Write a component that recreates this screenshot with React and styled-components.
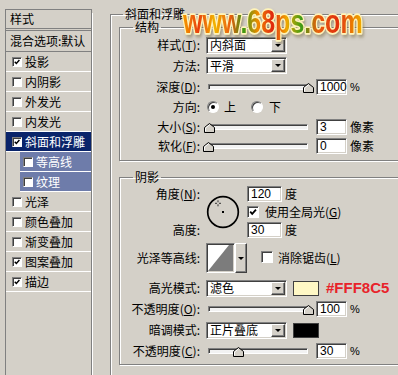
import React from "react";
import styled, { createGlobalStyle } from "styled-components";

const FACE = "#D4D0C8";
const SHADOW = "#808080";
const DARK = "#404040";
const CJK = `"Noto Sans CJK SC", "Noto Sans", sans-serif`;
const LATIN = `"Liberation Sans", Arial, sans-serif`;

const Global = createGlobalStyle`
  html, body { margin: 0; padding: 0; background: ${FACE}; }
  body {
    width: 398px; height: 375px; overflow: hidden;
    font-family: ${CJK}; font-size: 12px; line-height: 14px; color: #000;
  }
  * { box-sizing: border-box; }
`;

const Root = styled.div`
  position: relative;
  display: flex;
  align-items: flex-start;
  width: 398px;
  height: 375px;
  overflow: hidden;
`;

/* ---------- left style list ---------- */
const StyleList = styled.div`
  flex: none;
  width: 87px;
  height: 380px;
  margin: 9px 0 0 5px;
  border: 1px solid ${SHADOW};
  box-shadow: 5px 0 0 -4px #fff;
`;

const ListHeader = styled.div`
  display: flex;
  align-items: center;
  height: 21px;
  padding-left: 4px;
  border-bottom: 3px double ${SHADOW};
`;

const BlendRow = styled.div`
  display: flex;
  align-items: center;
  height: 21px;
  padding-left: 4px;
  border-bottom: 1px solid ${SHADOW};
  white-space: nowrap;
`;

const ListItem = styled.div`
  display: flex;
  align-items: center;
  gap: 3px;
  height: 20px;
  margin-left: ${(p) => (p.$sub ? 14 : 0)}px;
  padding-left: ${(p) => (p.$sub ? 3 : 6)}px;
  border-bottom: 1px solid #fff;
  background: ${(p) => (p.$selected ? "#0A246A" : p.$sub ? "#6E7CAA" : "transparent")};
  color: ${(p) => (p.$selected || p.$sub ? "#fff" : "#000")};
  white-space: nowrap;
`;

const Box = styled.span`
  flex: none;
  display: inline-flex;
  width: ${(p) => p.$size}px;
  height: ${(p) => p.$size}px;
  background: #fff;
  border: 1px solid;
  border-color: ${SHADOW} #fff #fff ${SHADOW};
  box-shadow: inset 1px 1px ${DARK};
  svg { display: block; }
`;

function Check({ on, size = 10 }) {
  return (
    <Box $size={size}>
      {on && (
        <svg width={size - 2} height={size - 2} viewBox="0 0 10 10">
          <path d="M2.2 4.6 L4.2 6.8 L8 2.6" fill="none" stroke="#000" strokeWidth="1.8" />
        </svg>
      )}
    </Box>
  );
}

/* ---------- right dialog ---------- */
const EffectFrame = styled.fieldset`
  flex: none;
  width: 330px;
  height: 400px;
  margin: 8px 0 0 18px;
  padding: 0 0 0 8px;
  border: 1px solid ${SHADOW};
  box-shadow: inset 1px 1px #fff, 1px 1px #fff;
  min-inline-size: 0;
`;

const Section = styled.fieldset`
  width: 300px;
  margin: ${(p) => p.$mt}px 0 0 0;
  padding: ${(p) => p.$pad};
  border: 1px solid ${SHADOW};
  box-shadow: inset 1px 1px #fff, 1px 1px #fff;
  min-inline-size: 0;
`;

const Caption = styled.legend`
  margin-left: ${(p) => p.$indent}px;
  padding: 0 2px;
  height: 12px;
  line-height: 12px;
  white-space: nowrap;
`;

const Row = styled.div`
  display: flex;
  align-items: center;
  height: ${(p) => p.$h || 20}px;
  margin-top: ${(p) => p.$mt || 0}px;
  white-space: nowrap;
`;

const Label = styled.span`
  flex: none;
  width: 80px;
  margin-right: 6px;
  text-align: right;
  white-space: nowrap;
`;

const Unit = styled.span`
  margin-left: ${(p) => (p.$gap ?? 3)}px;
  font-family: ${(p) => (p.$latin ? LATIN : CJK)};
  font-size: ${(p) => (p.$latin ? 11 : 12)}px;
`;

const Sunken = `
  border: 1px solid;
  border-color: ${SHADOW} #fff #fff ${SHADOW};
  box-shadow: inset 1px 1px ${DARK}, inset -1px -1px ${FACE};
`;

const Raised = `
  background: ${FACE};
  border: 1px solid;
  border-color: #fff ${DARK} ${DARK} #fff;
  box-shadow: inset -1px -1px ${SHADOW};
`;

const NumField = styled.div`
  flex: none;
  width: ${(p) => p.$w || 31}px;
  height: 16px;
  ${Sunken}
  background: #fff;
  padding-left: 3px;
  font-family: ${LATIN};
  font-size: 12px;
  line-height: 14px;
`;

const Arrow = styled.span`
  width: 0;
  height: 0;
  border-left: 3px solid transparent;
  border-right: 3px solid transparent;
  border-top: 3px solid #000;
`;

const DropButton = styled.span`
  flex: none;
  display: flex;
  align-items: center;
  justify-content: center;
  width: ${(p) => p.$w || 14}px;
  height: ${(p) => p.$h || 13}px;
  ${Raised}
`;

const SelectBox = styled.div`
  flex: none;
  display: flex;
  align-items: center;
  justify-content: space-between;
  width: 81px;
  height: 17px;
  ${Sunken}
  background: #fff;
  padding: 0 1px 0 3px;
`;

function Select({ value }) {
  return (
    <SelectBox>
      <span>{value}</span>
      <DropButton>
        <Arrow />
      </DropButton>
    </SelectBox>
  );
}

const SliderBox = styled.div`
  position: relative;
  flex: none;
  display: flex;
  align-items: center;
  width: 104px;
  height: 14px;
  margin-right: 6px;
`;

const Track = styled.div`
  flex: 1;
  height: 6px;
  margin: 0 2px;
  border: 1px solid;
  border-color: ${SHADOW} #fff #fff ${SHADOW};
  box-shadow: inset 1px 1px ${DARK};
  background: #f2f2f2;
`;

const Thumb = styled.svg`
  position: absolute;
  top: 3px;
  display: block;
`;

function Slider({ pct }) {
  const left = 2 + (pct / 100) * 100 - 5.5;
  return (
    <SliderBox>
      <Track />
      <Thumb width="11" height="10" viewBox="0 0 11 10" style={{ left: `${left}px` }}>
        <polygon points="0.5,4.5 5.5,0.5 10.5,4.5 10.5,9.5 0.5,9.5" fill={FACE} stroke="#000" strokeWidth="1" />
        <polyline points="1.5,8.5 1.5,5 5.5,1.8" fill="none" stroke="#fff" strokeWidth="1" />
      </Thumb>
    </SliderBox>
  );
}

const RadioDot = styled.span`
  flex: none;
  display: inline-flex;
  align-items: center;
  justify-content: center;
  width: 12px;
  height: 12px;
  border-radius: 50%;
  background: #fff;
  border: 1px solid;
  border-color: ${SHADOW} #fff #fff ${SHADOW};
  box-shadow: inset 1px 1px ${DARK};
  margin-left: ${(p) => p.$ml || 0}px;
  &::after {
    content: "";
    display: ${(p) => (p.$on ? "block" : "none")};
    width: 4px;
    height: 4px;
    border-radius: 50%;
    background: #000;
  }
`;

const Swatch = styled.span`
  flex: none;
  width: 26px;
  height: 15px;
  margin-left: 6px;
  background: ${(p) => p.$color};
  border: 1px solid ${DARK};
`;

const HexNote = styled.span`
  margin-left: 7px;
  font-family: ${LATIN};
  font-weight: bold;
  font-size: 15px;
  color: #E8232A;
`;

const AngleGrid = styled.div`
  display: grid;
  grid-template-columns: 86px 41px 1fr;
  grid-template-rows: 18px 18px 18px;
  align-items: center;
  white-space: nowrap;
`;

const GridLabel = styled.span`
  grid-column: 1;
  grid-row: ${(p) => p.$row};
  padding-right: 6px;
  text-align: right;
`;

const Dial = styled.svg`
  grid-column: 2;
  grid-row: 1 / 4;
  display: block;
`;

const GridCell = styled.div`
  grid-column: 3;
  grid-row: ${(p) => p.$row};
  display: flex;
  align-items: center;
`;

const ContourPicker = styled.div`
  flex: none;
  display: flex;
  height: 30px;
`;

const ContourSwatch = styled.div`
  width: 29px;
  height: 30px;
  ${Sunken}
  background: #fff;
  padding: 1px;
  svg { display: block; }
`;

const CheckLabel = styled.span`
  margin-left: ${(p) => p.$gap || 6}px;
`;

const Watermark = styled.svg`
  position: absolute;
  left: 178px;
  top: 0px;
  pointer-events: none;
`;

const U = styled.span`
  text-decoration: underline;
`;

function Key({ k }) {
  return (
    <>
      (<U>{k}</U>):
    </>
  );
}

const items = [
  { name: "投影", on: true },
  { name: "内阴影" },
  { name: "外发光" },
  { name: "内发光" },
  { name: "斜面和浮雕", on: true, selected: true },
  { name: "等高线", sub: true },
  { name: "纹理", sub: true },
  { name: "光泽" },
  { name: "颜色叠加" },
  { name: "渐变叠加" },
  { name: "图案叠加", on: true },
  { name: "描边", on: true },
];

export default function App() {
  return (
    <Root>
      <Global />
      <StyleList>
        <ListHeader>样式</ListHeader>
        <BlendRow>混合选项:默认</BlendRow>
        {items.map((it) => (
          <ListItem key={it.name} $selected={it.selected} $sub={it.sub}>
            <Check on={it.on} size={10} />
            <span>{it.name}</span>
          </ListItem>
        ))}
      </StyleList>

      <EffectFrame>
        <Caption $indent={4}>斜面和浮雕</Caption>

        <Section $mt={1} $pad="2px 0 4px 0">
          <Caption $indent={13}>结构</Caption>
          <Row $h={20}>
            <Label>
              样式<Key k="T" />
            </Label>
            <Select value="内斜面" />
          </Row>
          <Row $h={21}>
            <Label>方法:</Label>
            <Select value="平滑" />
          </Row>
          <Row $h={21}>
            <Label>
              深度<Key k="D" />
            </Label>
            <Slider pct={100} />
            <NumField>1000</NumField>
            <Unit $latin>%</Unit>
          </Row>
          <Row $h={20}>
            <Label>方向:</Label>
            <RadioDot $on $ml={1} />
            <CheckLabel $gap={5}>上</CheckLabel>
            <RadioDot $ml={15} />
            <CheckLabel $gap={6}>下</CheckLabel>
          </Row>
          <Row $h={19}>
            <Label>
              大小<Key k="S" />
            </Label>
            <Slider pct={1.2} />
            <NumField>3</NumField>
            <Unit>像素</Unit>
          </Row>
          <Row $h={20}>
            <Label>
              软化<Key k="F" />
            </Label>
            <Slider pct={0} />
            <NumField>0</NumField>
            <Unit>像素</Unit>
          </Row>
        </Section>

        <Section $mt={10} $pad="2px 0 3px 0">
          <Caption $indent={13}>阴影</Caption>
          <AngleGrid>
            <GridLabel $row={1}>
              角度<Key k="N" />
            </GridLabel>
            <Dial width="34" height="34" viewBox="0 0 34 34">
              <circle cx="17" cy="17" r="15.3" fill="none" stroke="#000" strokeWidth="1.7" />
              <rect x="16" y="16" width="2" height="2" fill="#000" />
              <path
                d="M12 5.3 v2 M12 9.3 v2 M9 8.3 h2 M13 8.3 h2"
                stroke="#333"
                strokeWidth="1"
                fill="none"
              />
            </Dial>
            <GridCell $row={1}>
              <NumField $w={35}>120</NumField>
              <Unit>度</Unit>
            </GridCell>
            <GridCell $row={2}>
              <Check on size={12} />
              <CheckLabel>
                使用全局光(<U>G</U>)
              </CheckLabel>
            </GridCell>
            <GridLabel $row={3}>高度:</GridLabel>
            <GridCell $row={3}>
              <NumField $w={35}>30</NumField>
              <Unit>度</Unit>
            </GridCell>
          </AngleGrid>

          <Row $h={30} $mt={4}>
            <Label>光泽等高线:</Label>
            <ContourPicker>
              <ContourSwatch>
                <svg width="25" height="26" viewBox="0 0 25 26">
                  <polygon points="0,26 21,0 25,0 25,26" fill="#7c7c7c" />
                </svg>
              </ContourSwatch>
              <DropButton $w={12} $h={30}>
                <Arrow />
              </DropButton>
            </ContourPicker>
            <CheckLabel $gap={14}>
              <Check size={12} />
            </CheckLabel>
            <CheckLabel $gap={5}>
              消除锯齿(<U>L</U>)
            </CheckLabel>
          </Row>

          <Row $mt={5}>
            <Label>高光模式:</Label>
            <Select value="滤色" />
            <Swatch $color="#FFF8C5" />
            <HexNote>#FFF8C5</HexNote>
          </Row>
          <Row $mt={1}>
            <Label>
              不透明度<Key k="O" />
            </Label>
            <Slider pct={100} />
            <NumField>100</NumField>
            <Unit $latin>%</Unit>
          </Row>
          <Row $mt={1}>
            <Label>暗调模式:</Label>
            <Select value="正片叠底" />
            <Swatch $color="#000" />
          </Row>
          <Row $mt={1}>
            <Label>
              不透明度<Key k="C" />
            </Label>
            <Slider pct={30} />
            <NumField>30</NumField>
            <Unit $latin>%</Unit>
          </Row>
        </Section>
      </EffectFrame>

      <Watermark width="200" height="44" viewBox="0 0 200 44">
        <defs>
          <linearGradient id="wmFill" x1="0" y1="0" x2="1" y2="0">
            <stop offset="0%" stopColor="#F5A000" />
            <stop offset="9%" stopColor="#E8400E" />
            <stop offset="18%" stopColor="#F2B400" />
            <stop offset="27%" stopColor="#E85A10" />
            <stop offset="34%" stopColor="#3C9A12" />
            <stop offset="42%" stopColor="#F08A00" />
            <stop offset="50%" stopColor="#E0280E" />
            <stop offset="58%" stopColor="#F0A800" />
            <stop offset="66%" stopColor="#3E9C14" />
            <stop offset="75%" stopColor="#E8600C" />
            <stop offset="86%" stopColor="#E0300E" />
            <stop offset="100%" stopColor="#F0B000" />
          </linearGradient>
          <filter id="wmShadow" x="-10%" y="-20%" width="120%" height="150%">
            <feDropShadow dx="1.5" dy="2" stdDeviation="1.2" floodColor="#7a6a40" floodOpacity="0.5" />
          </filter>
        </defs>
        <g transform="translate(5 33) scale(1 1.36)">
          <text
            x="0"
            y="0"
            fontFamily="Liberation Sans, Arial, sans-serif"
            fontWeight="bold"
            fontSize="25"
            fill="url(#wmFill)"
            stroke="#FFF3B8"
            strokeWidth="2.4"
            strokeLinejoin="round"
            paintOrder="stroke"
            filter="url(#wmShadow)"
          >
            www.68ps.com
          </text>
        </g>
      </Watermark>
    </Root>
  );
}
